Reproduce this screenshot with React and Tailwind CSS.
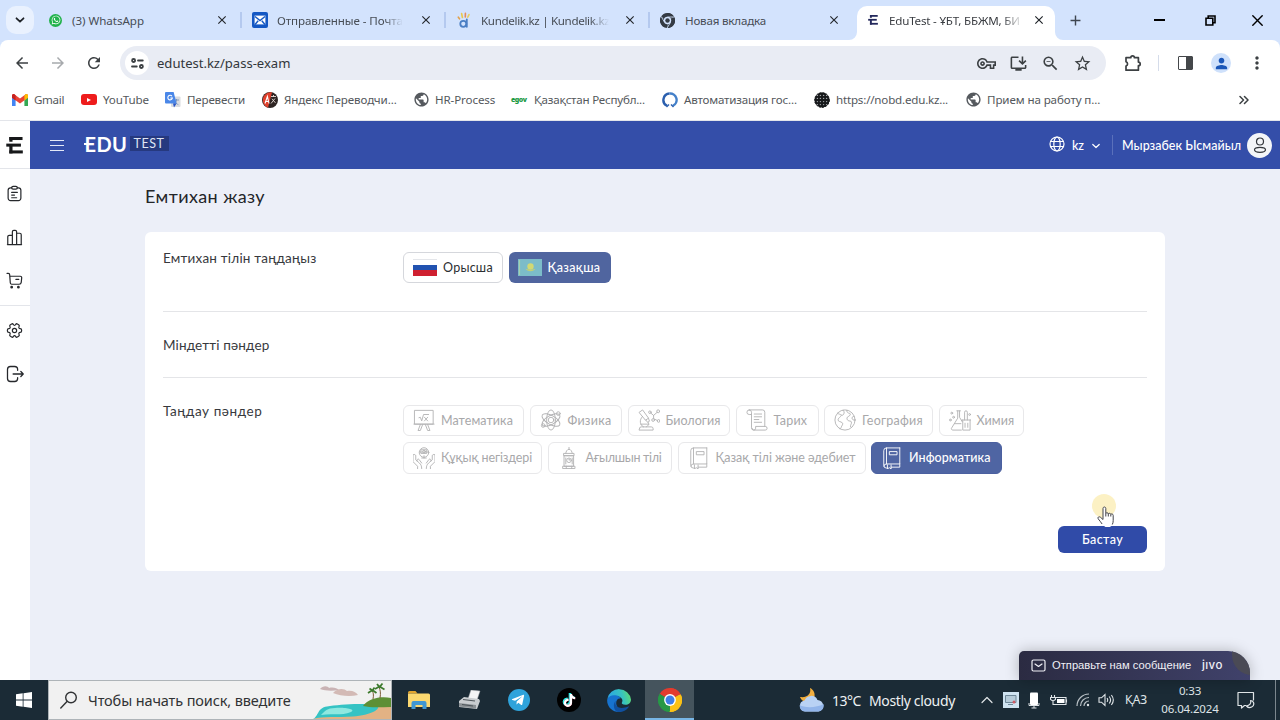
import React from "react";
import { FaWhatsapp, FaTiktok, FaTelegramPlane } from "react-icons/fa";
import {
  MdOutlineVpnKey,
  MdOutlineInstallDesktop,
  MdOutlineZoomOut,
  MdStarBorder,
  MdPublic,
  MdPerson,
  MdMoreVert,
  MdClose,
  MdAdd,
  MdArrowBack,
  MdArrowForward,
  MdRefresh,
} from "react-icons/md";

const LineIcon = ({ size = 22, box = 24, width = 1, className = "", children }) => (
  <svg
    width={size}
    height={size}
    viewBox={`0 0 ${box} ${box}`}
    fill="none"
    stroke="currentColor"
    strokeWidth={width}
    strokeLinecap="round"
    strokeLinejoin="round"
    className={`shrink-0 ${className}`}
  >
    {children}
  </svg>
);

/* ---------- brand icons ---------- */

const EduMark = ({ size, color }) => (
  <svg width={size} height={size} viewBox="0 0 18 18" fill={color}>
    <rect x="3.5" y="0" width="14" height="3.2" />
    <rect x="3.5" y="0" width="3.4" height="5" />
    <rect x="0.3" y="7" width="15.5" height="3.2" />
    <rect x="3.5" y="8" width="3.4" height="9.4" />
    <rect x="3.5" y="14.2" width="14.3" height="3.2" />
  </svg>
);

const ChromeIcon = ({ size, mono }) => {
  const c = mono ? ["#343b44", "#343b44", "#343b44", "#343b44"] : ["#e33b2e", "#fbc116", "#279847", "#3f7fe8"];
  return (
    <svg width={size} height={size} viewBox="0 0 24 24" className="shrink-0">
      <path d="M12 12 1.6 6A12 12 0 0 1 22.4 6Z" fill={c[0]} />
      <path d="M12 12 22.4 6A12 12 0 0 1 12 24Z" fill={c[1]} />
      <path d="M12 12V24A12 12 0 0 1 1.6 6Z" fill={c[2]} />
      <path d="M12 6.5H22.7L22.4 6A12 12 0 0 0 12 0Z" fill={c[0]} />
      <path d="M16.8 14.7 11.4 24H12A12 12 0 0 0 23 7Z" fill={c[1]} />
      <path d="M7.2 14.7 1.9 5.6A12 12 0 0 0 8 23Z" fill={c[2]} />
      {mono && (
        <path d="M12 6.4H22.6M16.8 14.8 11.5 24M7.2 14.8 1.9 5.6" stroke="#d3e3fd" strokeWidth="1.3" fill="none" />
      )}
      <circle cx="12" cy="12" r="5.9" fill={mono ? "#d3e3fd" : "#fff"} />
      <circle cx="12" cy="12" r={mono ? 3.6 : 4.5} fill={c[3]} />
    </svg>
  );
};

const MailIcon = () => (
  <svg width="16" height="16" viewBox="0 0 16 16">
    <rect width="16" height="16" rx="2" fill="#1458c4" />
    <rect x="2.6" y="3.6" width="10.8" height="8.8" fill="#fff" />
    <path d="m3 4.5 5 4 5-4M3 12.5l3.2-3.8M13 12.5l-3.2-3.8" stroke="#1458c4" strokeWidth="1.4" fill="none" />
  </svg>
);

const KundelikIcon = () => (
  <svg width="14" height="17" viewBox="0 0 14 17" fill="none" strokeLinecap="round">
    <circle cx="6.3" cy="11.8" r="3" stroke="#4b7fc4" strokeWidth="1.8" />
    <path d="M9.8 7.5v7.3" stroke="#4b7fc4" strokeWidth="1.8" />
    <path d="m1.3 5.2 1.2 1.6" stroke="#e3a04a" strokeWidth="1.6" />
    <path d="m4.6 1.5.8 4" stroke="#e9c94c" strokeWidth="1.6" />
    <path d="M8.4 1.2 8.3 5" stroke="#e68a5a" strokeWidth="1.6" />
    <path d="m12 2.6-1.2 2.6" stroke="#e6cf63" strokeWidth="1.6" />
  </svg>
);

const GmailIcon = () => (
  <svg width="16" height="12" viewBox="0 0 16 12">
    <path d="M0 1.5V12h3.6V4.6Z" fill="#4285f4" />
    <path d="M16 1.5V12h-3.6V4.6Z" fill="#34a853" />
    <path d="M0 3.8V1.5C0 .2 1.5-.5 2.6.4L8 4.6 13.4.4C14.5-.5 16 .2 16 1.5v2.3L8 9.6Z" fill="#ea4335" />
    <path d="M12.4 1.2v5.2L16 3.8V1.5C16 .2 14.5-.5 13.4.4Z" fill="#fbbc04" />
    <path d="M0 1.5v2.3l3.6 2.6V1.2L2.6.4C1.5-.5 0 .2 0 1.5Z" fill="#c5221f" />
  </svg>
);

const TranslateIcon = () => (
  <svg width="16" height="16" viewBox="0 0 16 16">
    <rect x="6" y="4.5" width="9.5" height="10.5" rx="1" fill="#dadce0" />
    <path d="M9 8h5M11.5 7v1c0 2-1.2 3.6-2.6 4.6M10 9.5c.7 1.6 2 2.6 3.4 3.2" stroke="#7a93b8" strokeWidth=".9" fill="none" />
    <path d="M1 0h7.6l3 11.5H1a1 1 0 0 1-1-1V1a1 1 0 0 1 1-1Z" fill="#4a87e8" />
    <path d="m8 11.5 1 4 2.6-4Z" fill="#2a56c6" />
    <path d="M7 4.2A2.3 2.3 0 1 0 7.4 6H5.3" stroke="#fff" strokeWidth="1.1" fill="none" />
  </svg>
);

const YandexIcon = () => (
  <svg width="16" height="16" viewBox="0 0 16 16" fill="none">
    <circle cx="8" cy="8" r="8" fill="#2e2523" />
    <path d="M10 .3 6 15.7A8 8 0 0 1 10 .3Z" fill="#e0412d" />
    <path d="m3 11.5 2.4-7 1.6 7M3.8 9.5h2.7" stroke="#fff" strokeWidth="1.1" />
    <path d="M9 4.5h5M11.5 3v2M10 6.8l3.4 4M13 6.5 9 11.5" stroke="#e8ddd8" strokeWidth=".9" />
  </svg>
);

const NobdIcon = () => (
  <svg width="16" height="16" viewBox="0 0 16 16">
    <circle cx="8" cy="8" r="7.5" fill="#17191b" />
    <circle cx="8" cy="8" r="7.4" fill="none" stroke="#17191b" strokeWidth="1" strokeDasharray="2 1.2" />
    {[3.4, 6.4, 9.6, 12.6].map((x) =>
      [3.4, 6.4, 9.6, 12.6].map((y) => <circle key={`${x}-${y}`} cx={x} cy={y} r=".7" fill="#a3a6a9" />)
    )}
  </svg>
);

/* ---------- browser ---------- */

const tabs = [
  {
    title: "(3) WhatsApp",
    text: "tracking-[-0.04px]",
    icon: (
      <span className="flex h-[13px] w-[13px] items-center justify-center rounded-full bg-[#22b24c] text-[10px] text-white">
        <FaWhatsapp />
      </span>
    ),
  },
  { title: "Отправленные - Почта", text: "tracking-[-0.09px] mask-r-from-85%", icon: <MailIcon /> },
  { title: "Kundelik.kz | Kundelik.kz", text: "tracking-[-0.33px] mask-r-from-85%", icon: <KundelikIcon /> },
  { title: "Новая вкладка", text: "tracking-[-0.2px]", icon: <ChromeIcon size={15} mono /> },
];

const TabStrip = () => (
  <div className="flex h-10 bg-[#d3e3fd] text-[11.6px] text-[#474d55]">
    <div className="flex w-[38px] shrink-0 items-center pl-1.5">
      <div className="flex h-7 w-7 items-center justify-center rounded-[10px] bg-[#e9f1fe]">
        <LineIcon size={10} box={10} width={1.8} className="text-[#1f2328]">
          <path d="m1.5 3.3 3.5 3.4 3.5-3.4" />
        </LineIcon>
      </div>
    </div>
    {tabs.map((tab, i) => (
      <div key={i} className="flex w-[204px] shrink-0 items-center">
        <span className="flex w-[34px] shrink-0 justify-center pl-px">{tab.icon}</span>
        <span className={`whitespace-nowrap pt-0.5 ${i === 0 ? "" : "ml-px"} ${tab.text}`}>{tab.title}</span>
        <span className="ml-auto mr-[11px] text-[14px] text-[#24282d]">
          <MdClose />
        </span>
        <span className={`h-4 w-0.5 ${i < 3 ? "bg-[#b4c9ef]" : ""}`} />
      </div>
    ))}
    <div className="relative ml-[3px] mt-1.5 flex w-[198px] shrink-0 items-center rounded-t-[10px] bg-white pb-1.5 text-[#3a3d42]">
      <svg className="absolute -left-2 bottom-0" width="8" height="8" viewBox="0 0 8 8">
        <path d="M8 0v8H0A8 8 0 0 0 8 0Z" fill="#fff" />
      </svg>
      <svg className="absolute -right-2 bottom-0" width="8" height="8" viewBox="0 0 8 8">
        <path d="M0 0v8h8A8 8 0 0 1 0 0Z" fill="#fff" />
      </svg>
      <span className="ml-[11px] w-[20px]">
        <EduMark size={10} color="#23285c" />
      </span>
      <span className="ml-px w-[134px] whitespace-nowrap pt-0.5 tracking-[-0.2px] mask-r-from-85%">
        EduTest - ҰБТ, ББЖМ, БИ
      </span>
      <span className="ml-[9px] text-[14px] text-[#1f2328]">
        <MdClose />
      </span>
    </div>
    <div className="flex w-10 items-center justify-center text-[17px] text-[#3f4650]">
      <MdAdd />
    </div>
    <div className="ml-auto flex items-center text-black">
      <span className="mr-[40px] h-[1.5px] w-[11px] bg-black" />
      <LineIcon size={11} box={11} width={1.6} className="mr-[36px]">
        <path d="M1 3.2h6.8V10H1ZM3.2 3V1H10v6.8H8" strokeLinejoin="miter" />
      </LineIcon>
      <LineIcon size={11} box={11} width={1.4} className="mr-[17.5px]">
        <path d="m.8.8 9.4 9.4M10.2.8.8 10.2" />
      </LineIcon>
    </div>
  </div>
);

const Toolbar = () => (
  <div className="bg-[#d3e3fd]">
    <div className="flex h-[46px] items-center rounded-t-lg bg-white text-[#3c4043]">
      <MdArrowBack className="ml-[13px] text-[18px]" />
      <MdArrowForward className="ml-[18px] text-[18px] text-[#a7aaad]" />
      <MdRefresh className="ml-[18px] text-[18px]" />
      <div className="ml-[17px] flex h-[34px] w-[986px] items-center rounded-full bg-[#e9ecf4]">
        <span className="ml-[5px] flex h-6 w-6 items-center justify-center rounded-full bg-white">
          <LineIcon size={13} box={13} width={1.8}>
            <circle cx="2.6" cy="3.5" r="1.5" />
            <path d="M7 3.5h4.8M1 9.5h4.8" />
            <circle cx="10.4" cy="9.5" r="1.5" />
          </LineIcon>
        </span>
        <span className="ml-2 pt-px text-[13.1px] tracking-[-0.03px] text-[#33373b]">edutest.kz/pass-exam</span>
        <span className="ml-auto flex items-center gap-[13px] pr-[14.5px] text-[19px]">
          <MdOutlineVpnKey />
          <MdOutlineInstallDesktop />
          <MdOutlineZoomOut />
          <MdStarBorder />
        </span>
      </div>
      <LineIcon size={18} box={18} width={1.7} className="ml-[18px]">
        <path d="M2 3.7h4.8a1.8 1.8 0 0 1 3.6 0h4v4.4a1.8 1.8 0 0 1 0 3.6v4.5H2V12a2.2 2.2 0 0 0 0-4.2Z" />
      </LineIcon>
      <span className="ml-[16px] h-4 w-px bg-[#d5dcea]" />
      <span className="ml-[19px] flex h-[14px] w-[15px] rounded-[1px] border-[1.6px] border-[#44474a]">
        <span className="ml-auto w-[6px] bg-[#44474a]" />
      </span>
      <span className="ml-[18px] flex h-5 w-5 items-center justify-center rounded-full bg-[#cfe1fb] text-[17px] text-[#1b57b8]">
        <MdPerson />
      </span>
      <MdMoreVert className="ml-[16px] text-[20px]" />
    </div>
  </div>
);

const Bookmark = ({ icon, iconWidth, width, tracking, children }) => (
  <div className={`flex shrink-0 items-center ${width}`}>
    <span className={`flex shrink-0 ${iconWidth}`}>{icon}</span>
    <span className={`whitespace-nowrap ${tracking}`}>{children}</span>
  </div>
);

const Bookmarks = () => (
  <div className="flex h-[35px] items-center border-b border-[#e3e5ea] bg-white pb-[6px] pl-3 text-[11.6px] text-[#54585c]">
    <Bookmark icon={<GmailIcon />} iconWidth="w-[22px]" width="w-[69px]" tracking="tracking-[-0.34px]">Gmail</Bookmark>
    <Bookmark
      icon={
        <span className="flex h-[11px] w-4 items-center justify-center rounded-[3px] bg-[#ee1c1c]">
          <span className="border-y-[2.5px] border-l-[4px] border-y-transparent border-l-white" />
        </span>
      }
      iconWidth="w-[22px]"
      width="w-[84px]"
      tracking="tracking-[-0.12px]"
    >
      YouTube
    </Bookmark>
    <Bookmark icon={<TranslateIcon />} iconWidth="w-[22px]" width="w-[97px]" tracking="tracking-[-0.18px]">Перевести</Bookmark>
    <Bookmark icon={<YandexIcon />} iconWidth="w-[22px]" width="w-[152px]" tracking="tracking-[-0.08px]">Яндекс Переводчи...</Bookmark>
    <Bookmark icon={<MdPublic className="-ml-px text-[17px] text-[#55595e]" />} iconWidth="w-[21px]" width="w-[97px]" tracking="tracking-[-0.11px]">HR-Process</Bookmark>
    <Bookmark
      icon={<span className="text-[7px] font-black leading-none tracking-[-0.5px] text-[#1c9a43]">egov</span>}
      iconWidth="w-[23px]"
      width="w-[151px]"
      tracking="tracking-[-0.23px]"
    >
      Қазақстан Республ...
    </Bookmark>
    <Bookmark
      icon={
        <svg width="16" height="16" viewBox="0 0 16 16" fill="none" strokeWidth="2.4">
          <path d="M5 13.8A6.5 6.500 0 0 1 7.6 1.5" stroke="#2b5fae" />
          <path d="M7.6 1.5A6.5 6.500 0 0 1 11 13.800" stroke="#4480c9" />
          <path d="m4.500 15 2.500-2.500M11.500 15 9 12.500" stroke="#2b5fae" strokeWidth="1.400" />
        </svg>
      }
      iconWidth="w-[22px]"
      width="w-[152px]"
      tracking="tracking-[-0.2px]"
    >
      Автоматизация гос...
    </Bookmark>
    <Bookmark icon={<NobdIcon />} iconWidth="w-[22px]" width="w-[152px]" tracking="tracking-[-0.2px]">https://nobd.edu.kz...</Bookmark>
    <Bookmark icon={<MdPublic className="-ml-px text-[17px] text-[#55595e]" />} iconWidth="w-[21px]" width="w-[140px]" tracking="tracking-[-0.11px]">Прием на работу п...</Bookmark>
    <LineIcon size={10} box={10} width={1.5} className="ml-auto mr-[31px] text-[#3c4043]">
      <path d="m1 1.5 3.5 3.5L1 8.5M5.5 1.5 9 5 5.5 8.5" />
    </LineIcon>
  </div>
);

/* ---------- application ---------- */

const Sidebar = () => (
  <aside className="flex w-[30px] shrink-0 flex-col items-center bg-white pr-px text-[#26282c]">
    <div className="-mr-px flex h-12 w-[30px] items-center justify-center border-b border-[#e3e5ea] pr-[2px] pt-px">
      <EduMark size={17} color="#17181a" />
    </div>
    <div className="flex flex-col items-center gap-[26.5px] pt-4">
      <LineIcon size={17} width={1.7}>
        <path d="M8 4H6.5A3.5 3.5 0 0 0 3 7.5v11A3.5 3.5 0 0 0 6.5 22h11a3.5 3.5 0 0 0 3.5-3.5v-11A3.5 3.5 0 0 0 17.5 4H16" />
        <rect x="8" y="1.8" width="8" height="4" rx="2" />
        <path d="M8 10.5h8M8 14.2h4M8 18h7" />
      </LineIcon>
      <LineIcon size={17} width={1.7}>
        <path d="M2 22h20M9 22V4a2 2 0 0 1 2-2h2a2 2 0 0 1 2 2v18M2.5 22V11a2 2 0 0 1 2-2H9M15 6h4.500a2 2 0 0 1 2 2v14" />
      </LineIcon>
      <LineIcon size={17} width={1.7}>
        <path d="M1.5 2h1.7A2 2 0 0 1 5.2 4l.9 11.5a2 2 0 0 0 2 1.8h10.4a3 3 0 0 0 3-2.7l.7-6.6A2 2 0 0 0 20.200 6H5.5M14 10.5h4" />
        <circle cx="8" cy="21.5" r="1.1" fill="currentColor" />
        <circle cx="17.5" cy="21.5" r="1.1" fill="currentColor" />
      </LineIcon>
    </div>
    <div className="-mr-px mt-4 h-px w-[30px] bg-[#e3e5ea]" />
    <div className="mt-[15.5px] flex flex-col items-center gap-[26px]">
      <LineIcon size={17} width={1.7}>
        <circle cx="12" cy="12" r="3" />
        <path d="M2 12.88v-1.76c0-1.04.85-1.9 1.9-1.9 1.81 0 2.55-1.28 1.64-2.85-.52-.9-.21-2.07.7-2.59l1.73-.99c.79-.47 1.81-.19 2.28.6l.11.19c.9 1.57 2.38 1.57 3.29 0l.11-.19c.47-.79 1.49-1.07 2.28-.6l1.73.99c.91.52 1.22 1.69.7 2.59-.91 1.57-.17 2.85 1.64 2.85 1.04 0 1.9.85 1.9 1.9v1.76c0 1.04-.85 1.9-1.9 1.9-1.81 0-2.55 1.28-1.64 2.85.52.91.21 2.07-.7 2.59l-1.73.99c-.79.47-1.81.19-2.28-.6l-.11-.19c-.9-1.57-2.38-1.57-3.29 0l-.11.19c-.47.79-1.49 1.07-2.28.6l-1.73-.99a1.9 1.9 0 0 1-.7-2.59c.91-1.57.17-2.85-1.64-2.85-1.05 0-1.9-.86-1.9-1.9Z" />
      </LineIcon>
      <LineIcon size={18} width={1.7}>
        <path d="M15.5 7V6a4 4 0 0 0-4-4H6a4 4 0 0 0-4 4v12a4 4 0 0 0 4 4h5.5a4 4 0 0 0 4-4v-1M9.5 12H23M19.8 8.7 23 12l-3.2 3.3" />
      </LineIcon>
    </div>
  </aside>
);

const Header = () => (
  <header className="flex h-12 items-center bg-[#344ea9] text-white">
    <div className="ml-5 flex w-[14px] flex-col gap-[3.5px] pt-px">
      <span className="h-[1.5px] bg-[#e3e8f7]" />
      <span className="h-[1.5px] bg-[#e3e8f7]" />
      <span className="h-[1.5px] bg-[#e3e8f7]" />
    </div>
    <div className="relative mb-[3px] ml-[20.5px] w-[45px] text-[20px] font-bold leading-none tracking-[0.4px]">
      EDU
      <span className="absolute -left-px top-[9px] h-[2.5px] w-[4px] bg-white" />
    </div>
    <span className="mb-[3px] flex h-[15px] w-[39px] items-center justify-center bg-[#26397f] pt-px text-[12.5px] tracking-[0.5px] text-[#dfe5f5]">
      TEST
    </span>
    <div className="ml-auto flex items-center text-[12.5px] font-medium">
      <LineIcon size={16} box={16} width={1.2} className="mb-[3px]">
        <circle cx="8" cy="8" r="7" />
        <ellipse cx="8" cy="8" rx="3.2" ry="7" />
        <path d="M1.7 5.5h12.6M1.7 10.5h12.6" />
      </LineIcon>
      <span className="ml-[7px] pt-0.5">kz</span>
      <LineIcon size={8} box={8} width={1.2} className="ml-2 mt-0.5">
        <path d="m.8 2.5 3.200 3 3.200-3" />
      </LineIcon>
      <span className="ml-[12px] h-5 w-px bg-[#5a70bb]" />
      <span className="ml-[9px] w-[119px] whitespace-nowrap pt-0.5 tracking-[0.02px]">Мырзабек Ысмайыл</span>
      <span className="ml-[6px] mr-2 flex h-[25px] w-[25px] items-center justify-center rounded-full bg-[#f4f5f8] text-[#33363b]">
        <LineIcon size={16} box={16} width={1.2}>
          <circle cx="8" cy="4.5" r="3.5" />
          <ellipse cx="8" cy="12.8" rx="5.5" ry="2.5" />
        </LineIcon>
      </span>
    </div>
  </header>
);

const BookIcon = (
  <LineIcon>
    <path d="M20.5 1H6a3 3 0 0 0-3 3v16a3 3 0 0 0 3 3h1M20.5 1v17.5H6A2.6 2.6 0 0 0 3.2 21M6 1v17.5M20.5 18.5V22H11M9.5 5h8v3.5h-8ZM7 19.5V24l2-1.5 2 1.5v-4.5" />
  </LineIcon>
);

const subjects = [
  [
    {
      name: "Математика",
      width: "w-[121px]",
      text: "tracking-[0.07px]",
      icon: (
        <LineIcon>
          <path d="M2 1.5h20v15H2ZM1 16.5h22M8 17l-2.500 6.500h2.500L10.500 17M16 17l2.500 6.500H16L13.500 17M6.500 9.500l1.500-.5 1.500 4 2-7H17M12.500 9l3.500 4M16 9l-3.500 4" />
        </LineIcon>
      ),
    },
    {
      name: "Физика",
      width: "w-[92.5px]",
      text: "tracking-[0.25px]",
      icon: (
        <LineIcon>
          <circle cx="12" cy="12" r="3" />
          <ellipse cx="12" cy="12" rx="4.8" ry="11" />
          <ellipse cx="12" cy="12" rx="4.8" ry="11" transform="rotate(60 12 12)" />
          <ellipse cx="12" cy="12" rx="4.8" ry="11" transform="rotate(120 12 12)" />
          <circle cx="20" cy="5" r="2" />
          <circle cx="3.5" cy="18" r="2" />
        </LineIcon>
      ),
    },
    {
      name: "Биология",
      width: "w-[102.5px]",
      text: "tracking-[0.04px]",
      icon: (
        <LineIcon>
          <path d="M1.500 3.500 5 1l6.500 9-3 2ZM8.500 12l2 2.500 2-1.200-1-3M5 8c-4 4-3 9.500 1 11.500M3 16.500h9M11 14.500c1.500 2 0 4-2 5M1.500 23h15v-1.500a2 2 0 0 0-2-2H3.500a2 2 0 0 0-2 2ZM14 4.500l3 2.500 4-3.500M17 7v3.500l4 2" />
          <circle cx="13" cy="3.500" r="1.400" />
          <circle cx="22" cy="2.500" r="1.600" />
          <circle cx="16.500" cy="12" r="1.500" />
          <circle cx="22.500" cy="13" r="1.500" />
        </LineIcon>
      ),
    },
    {
      name: "Тарих",
      width: "w-[83px]",
      text: "tracking-[0.25px]",
      icon: (
        <LineIcon>
          <path d="M3.5 1H18a2.5 2.5 0 0 1 2.5 2.5V19M3.5 1A2.5 2.5 0 0 0 3.5 6H6M3.5 1A2.5 2.5 0 0 1 6 3.5V20.5A2.5 2.5 0 0 0 8.5 23H21a2 2 0 0 0 0-4H10.5v2a2 2 0 0 1-4 0M9 5.500h8M9 8.500h8M9 11.500h5M9 14.500h8" />
        </LineIcon>
      ),
    },
    {
      name: "География",
      width: "w-[109px]",
      text: "tracking-[0.24px]",
      icon: (
        <LineIcon>
          <circle cx="12" cy="12" r="11" />
          <path d="M4 4.500c1 1.500 3 1 4 2s2.500 0 3-2-1-2-1-3.300M8 7c-1 2.500-3 2-3.500 4.500s3 2 4.500 3.500-.5 3-1 4.500-.5 2.500-2 2M14 1.300c-.5 2 1 3 3 3.500s0 3-1.500 3.500-2 2.500-.5 4 3.500 0 4 2-1.500 3-1 5M22 8c-2 0-3 1.500-2 3s2 1 3 1" />
        </LineIcon>
      ),
    },
    {
      name: "Химия",
      width: "w-[85.5px]",
      text: "tracking-[0.1px]",
      icon: (
        <LineIcon>
          <path d="M8.500 2h4M9.500 2v8L3 20.500A1.500 1.500 0 0 0 4.300 23h9.200M11.500 2v7l3 5M6 16h7M14 12h10M15 12v11h8V12M17 12V3.500a1.500 1.500 0 0 1 3 0V12M17.500 15.500v4.500M20.500 15.500v4.500" />
          <circle cx="3" cy="4.500" r="1" />
          <circle cx="5" cy="9" r="1" />
          <circle cx="1.500" cy="12" r="1" />
          <circle cx="22.500" cy="6" r="1" />
        </LineIcon>
      ),
    },
  ],
  [
    {
      name: "Құқық негіздері",
      width: "w-[139px]",
      text: "tracking-[-0.12px]",
      icon: (
        <LineIcon>
          <path d="M0 8.500v7.500l5 5V24M0 8.500c1.500-1 3 0 3 1v4.500l4 3.500c1.500 1.500 2.500 3 2.500 6M4.500 15.500c-.5-2 1-3 2-2l3 4M24 8.500v7.500l-5 5V24M24 8.500c-1.500-1-3 0-3 1v4.500l-4 3.500c-1.500 1.500-2.500 3-2.500 6M19.500 15.500c.5-2-1-3-2-2l-3 4M9 3h6v4H9ZM12 9.500V12M9.500 12h5M7 5.500h10" />
          <circle cx="12" cy="6" r="5.200" />
          <circle cx="12" cy="5" r="1.500" />
        </LineIcon>
      ),
    },
    {
      name: "Ағылшын тілі",
      width: "w-[124.5px]",
      text: "tracking-[-0.3px]",
      icon: (
        <LineIcon>
          <path d="M12 0v2.500M8.500 7c0-2 1.500-4.500 3.500-4.500S15.500 5 15.500 7M6.500 7h11v2.500h-11ZM7 9.500h10V21H7ZM5.500 21h13v2.500h-13ZM8.500 12v6.500M15.500 12v6.500M9 21v2.500M15 21v2.500" />
          <circle cx="12" cy="14.500" r="2.500" />
          <path d="M12 13.200v1.300l1-.8" />
        </LineIcon>
      ),
    },
    { name: "Қазақ тілі және әдебиет", width: "w-[188px]", text: "tracking-[-0.05px]", icon: BookIcon },
    { name: "Информатика", width: "w-[130.5px]", text: "tracking-[0.06px]", icon: BookIcon, active: true },
  ],
];

const SubjectButton = ({ subject }) => (
  <button
    className={`flex h-[31.5px] shrink-0 items-center gap-1.5 rounded-md border pl-[9px] text-[12.5px] ${subject.width} ${
      subject.active ? "border-[#4b60a0] bg-[#4f65a3] font-medium text-white" : "border-[#e8e8ea] bg-white text-[#b2b2b4]"
    }`}
  >
    {subject.icon}
    <span className={`whitespace-nowrap pt-0.5 ${subject.active ? "" : "text-[#a8a8aa]"} ${subject.text}`}>{subject.name}</span>
  </button>
);

const RussianFlag = () => (
  <span className="flex h-[17px] w-6 flex-col border-t border-[#e4e6ea]">
    <span className="flex-1 bg-white" />
    <span className="flex-1 bg-[#2152b0]" />
    <span className="flex-1 bg-[#cf2030]" />
  </span>
);

const KazakhFlag = () => (
  <svg width="24" height="17" viewBox="0 0 24 17">
    <rect width="24" height="17" fill="#7cbcc9" />
    <path d="M1.5 1v15" stroke="#a5cfae" strokeWidth="1.2" />
    <circle cx="12.5" cy="7.5" r="3.2" fill="#d2d973" />
    <path d="M7.5 9.500c1.500 3.500 8.500 3.500 10 0-1.500 1.500-8.500 1.500-10 0Z" fill="#c3cf74" />
  </svg>
);

const ExamCard = () => (
  <section className="flex h-[339.5px] w-[1020px] flex-col rounded-md bg-white px-[18px] text-[13.5px] text-[#37393d]">
    <div className="flex h-20 border-b border-[#e4e5e8] pt-5">
      <div className="w-60 -translate-y-[4px] tracking-[0.2px]">Емтихан тілін таңдаңыз</div>
      <div className="flex gap-1.5 text-[12.5px]">
        <button className="flex h-[31.5px] w-[99.5px] items-center gap-1.5 rounded-md border border-[#d5d7dc] pl-[9px] text-[#2c2e32]">
          <RussianFlag />
          <span className="pt-0.5 tracking-[0.25px]">Орысша</span>
        </button>
        <button className="flex h-[31.5px] w-[102px] items-center gap-1.5 rounded-md bg-[#50659f] pl-[9px] font-medium text-white">
          <KazakhFlag />
          <span className="pt-0.5 tracking-[0.3px]">Қазақша</span>
        </button>
      </div>
    </div>
    <div className="flex h-[66px] items-center border-b border-[#e4e5e8] pt-0.5 tracking-[0.15px]">Міндетті пәндер</div>
    <div className="flex pt-[27px]">
      <div className="w-60 -translate-y-[4px] tracking-[0.58px]">Таңдау пәндер</div>
      <div className="flex flex-col gap-1.5">
        {subjects.map((row, i) => (
          <div key={i} className="flex gap-[5.5px]">
            {row.map((subject) => (
              <SubjectButton key={subject.name} subject={subject} />
            ))}
          </div>
        ))}
      </div>
    </div>
    <div className="relative mb-[18px] ml-auto mt-auto">
      <button className="block h-[27px] w-[89px] rounded-md bg-[#304ba8] pt-px text-[12.5px] font-medium tracking-[0.4px] text-white">
        Бастау
      </button>
      <span className="absolute left-[34px] top-[-32px] h-6 w-6 rounded-full bg-[#fbeeb5]/80" />
      <svg className="absolute left-[39px] top-[-20px]" width="18" height="22" viewBox="0 0 18 22">
        <path
          d="M6 14.5V2.5c0-2 2.8-2 2.8 0v5c.3-1.2 2.5-1 2.5.5.3-1.1 2.5-.9 2.5.5.4-1 2.4-.7 2.4.9v5.1c0 3.500-1.500 6-3.500 6.500H8.500C6.500 20 4 16 1.200 12.800c-1-1.500.8-2.600 2.200-1.600L6 13.500"
          fill="#fff"
        />
        <path
          d="M6 13.500V2.500c0-2 2.8-2 2.8 0v5c.3-1.2 2.5-1 2.5.5.3-1.1 2.5-.9 2.5.5.4-1 2.4-.7 2.4.9v5.100c0 1.500-.3 3-.9 4M6 13.500l-2.600-2.300c-1.400-1-3.200.1-2.200 1.600 1.400 1.600 2.700 3.500 3.900 5.200M8.800 7.500v3M11.300 8v2.500M13.800 8.500v2"
          fill="none"
          stroke="#43444a"
          strokeWidth="1"
        />
      </svg>
    </div>
  </section>
);

const JivoWidget = () => (
  <div className="absolute bottom-0 right-[30px] flex h-[29.5px] w-[231.5px] items-center overflow-hidden rounded-tl-[5px] rounded-tr-[22px] bg-linear-to-r from-[#2b2b42] to-[#40426b] font-['Liberation_Sans'] text-[11.2px] text-[#f0f0f6] shadow-[0_0_14px_rgba(0,0,0,0.25)]">
    <LineIcon size={15} box={15} width={1.2} className="ml-3">
      <rect x="1" y="2" width="13" height="11" rx="1.5" />
      <path d="m4 6 3.5 2.5L11 6" />
    </LineIcon>
    <span className="ml-[6.5px] w-[150px] whitespace-nowrap">Отправьте нам сообщение</span>
    <span className="font-['Inter'] text-[11.5px] font-medium tracking-[0.4px]">jıvo</span>
    <span className="absolute -right-1 -top-1 h-[28px] w-[22px] rounded-bl-[20px] bg-[#4a4a55]" />
  </div>
);

/* ---------- taskbar ---------- */

const BeachArt = () => (
  <svg width="78" height="38" viewBox="0 0 78 38" className="ml-auto">
    <path d="M7 8c3-4 8-3 9-1 4-1 8 0 10 2-6 1-14 1-19-1Z" fill="#c9b3b4" />
    <path d="M20 12c4-5 11-5 14-2 5-1 9 1 11 4-8 2-18 1-25-2Z" fill="#d3bab5" />
    <path d="M0 38C22 32 40 24 78 24v14Z" fill="#e2b284" />
    <path d="M0 38c6-3 4-11 14-12.500 12-2 36-4 50-1 5 3-6 10-24 11-16 1-30-.5-40 2.500Z" fill="#35c3c4" />
    <path d="M8 34c4-4 6-7 14-7 8-1 22 1 16 4-10 4-20 1-30 3Z" fill="#8fe8e0" />
    <path d="M50 25c6-8 18-10 28-8v9c-10 0-20 1-28-1Z" fill="#5d8f35" />
    <path d="M60 18c1-4 0-7-.5-8M67 17c1-5 0-8-.5-10" stroke="#7a5a34" strokeWidth="1" fill="none" />
    <path d="m55 12 4.500-3 4 3M56.500 7.500l3 2 2-3M62 8l4.500-2.500 5 3M64 3l2.500 3 3-3.500" stroke="#3d7a2d" strokeWidth="1.800" fill="none" />
  </svg>
);

const pinned = [
  <svg width="22" height="18" viewBox="0 0 22 18">
    <path d="M0 1.5A1.5 1.5 0 0 1 1.5 0h6l2 2.500H0Z" fill="#e2a52e" />
    <path d="M0 2.5h20.5A1.5 1.5 0 0 1 22 4v12H0Z" fill="#fbd870" />
    <path d="M3.5 18v-6a2 2 0 0 1 2-2h11a2 2 0 0 1 2 2v6h-4v-4h-7v4Z" fill="#3f97d3" />
  </svg>,
  <svg width="23" height="20" viewBox="0 0 23 20">
    <path d="M10 9 13 0l9 1-3 9Z" fill="#f4f5f6" stroke="#a9adb0" strokeWidth=".5" />
    <path d="m1 11 5-4 15 2 1 2-3 8-18-2Z" fill="#c9cdd0" />
    <path d="m1 13 17 2v3.5L1 16.5Z" fill="#8a9094" />
    <path d="m5 9.5 12 1.5M4 14.5l11 1.5" stroke="#4f565b" strokeWidth="1.2" />
  </svg>,
  <span className="flex h-[22px] w-[22px] items-center justify-center rounded-full bg-[#2fa3db] pr-0.5 text-[14px] text-white">
    <FaTelegramPlane />
  </span>,
  <span className="flex h-6 w-6 items-center justify-center rounded-full bg-black text-[13px] text-white">
    <FaTiktok className="[filter:drop-shadow(0.8px_0.5px_0_#fe2c55)_drop-shadow(-0.8px_-0.5px_0_#25f4ee)]" />
  </span>,
  <svg width="24" height="24" viewBox="0 0 24 24">
    <defs>
      <linearGradient id="edgeTop" x1="0" x2="1" y1="0.4" y2="0.2">
        <stop offset="0" stopColor="#2aa5e6" />
        <stop offset="0.6" stopColor="#37c3c0" />
        <stop offset="1" stopColor="#62dd6a" />
      </linearGradient>
    </defs>
    <path d="M.3 11A12 12 0 0 1 24 11.5c0 3.5-2.7 5.3-5.5 5.3-3 0-4.200-1.200-3.600-2.200C17 11 13 8 9 8 5 8 1.500 9 .3 11Z" fill="url(#edgeTop)" />
    <path d="M.2 11.5C1.5 8 5 6.800 8.500 7.200c3.500.4 5 2.300 5 3.300-5-1-6.800 8.500 1 11.500-1 1.500-3 2-5 1.700C3.500 22.500-.3 17 .2 11.500Z" fill="#1773cf" />
    <path d="M8.7 13c-1.5 5 3 9.500 13.500 5.200C19 23.500 14 24.500 10.500 23.800 6 22 6 15 8.700 13Z" fill="#10509f" />
  </svg>,
];

const Taskbar = () => (
  <footer className="flex h-10 shrink-0 items-center bg-[#1b2b36] font-['Noto_Sans','Open_Sans',sans-serif] text-[#eef1f3]">
    <div className="flex w-12 justify-center">
      <svg width="16" height="16" viewBox="0 0 16 16" fill="#fff">
        <path d="M0 2.3 6.7 1.3v6.3H0ZM7.5 1.2 16 0v7.6H7.5ZM0 8.400h6.700v6.300L0 13.700ZM7.500 8.400H16V16l-8.500-1.200Z" />
      </svg>
    </div>
    <div className="flex h-10 w-[344px] items-center border border-[#aeb4b8] bg-[#f1f1f1] text-[#303234]">
      <LineIcon size={18} box={18} width={1.4} className="ml-[11px]">
        <circle cx="11" cy="6.5" r="5.3" />
        <path d="M7 10.5.8 17" />
      </LineIcon>
      <span className="ml-[10px] whitespace-nowrap pt-0.5 text-[14.5px] tracking-[-0.12px]">Чтобы начать поиск, введите</span>
      <BeachArt />
    </div>
    <div className="ml-[2px] flex">
      {pinned.map((icon, i) => (
        <div key={i} className="flex h-10 w-[50px] items-center justify-center">
          {icon}
        </div>
      ))}
      <div className="ml-[1px] flex h-10 w-[49px] items-center justify-center border-b-2 border-[#78b6e6] bg-[#45545d] pt-0.5">
        <ChromeIcon size={24} />
      </div>
    </div>
    <div className="ml-[105px] flex items-center">
      <svg width="25" height="24" viewBox="0 0 25 24">
        <path d="M11 0c1.5 6-3 10-10 9 1 3 4 5 8 5 5 0 8-5 6-10-1-2-2.5-3.5-4-4Z" fill="#f2ae3e" />
        <path d="M6 23.5a5.500 5.500 0 0 1-.5-10.900A7 7 0 0 1 18.500 12a5.800 5.800 0 0 1 1 11.500Z" fill="#b9d2f4" />
        <path d="M6 23.5A5.5 5.500 0 0 1 .8 17c4 3 17 3 23.700-1a5.800 5.800 0 0 1-5 7.500Z" fill="#92b5ea" />
      </svg>
      <span className="ml-2 w-[37px] pt-px text-[14px] tracking-[-0.5px]">13°C</span>
      <span className="whitespace-nowrap pt-px text-[14px] tracking-[-0.35px]">Mostly cloudy</span>
    </div>
    <div className="ml-auto flex items-center text-[#dfe4e7]">
      <LineIcon size={12} box={12} width={1.2}>
        <path d="m1 8.5 5-5 5 5" />
      </LineIcon>
      <span className="ml-[10px] flex h-4 w-4 items-center justify-center bg-[#cfe3f1]">
        <svg width="12" height="12" viewBox="0 0 12 12">
          <path d="M.5 1.500h10.500v7H.5ZM3 10.500h5" fill="#b6cbd9" stroke="#6e8798" />
          <circle cx="9" cy="8" r="1.500" fill="#cf5a64" />
        </svg>
      </span>
      <svg className="ml-[9px]" width="12" height="17" viewBox="0 0 12 17" fill="none" stroke="#dfe4e7">
        <rect x="2" y="0.5" width="8" height="12.500" rx="1" fill="#fff" stroke="none" />
        <path d="M1 11v2.500h10V11M6 13.500V16M3.500 16h5" />
      </svg>
      <svg className="ml-[10px]" width="18" height="13" viewBox="0 0 18 13" fill="none" stroke="#dfe4e7" strokeWidth="1.1">
        <path d="M5 3.500h11v7H5M16.500 5.500v3" />
        <path d="M7 5h7.500v4H7Z" fill="#fff" stroke="none" />
        <path d="M1.500 1v2M4.500 1v2M.5 3.500h5v2l-2.500 1.500L.5 5.500ZM3 7v3.500h3" />
      </svg>
      <svg className="ml-[8px]" width="14" height="14" viewBox="0 0 14 14" fill="none" stroke="#b9c1c6" strokeWidth="1.2">
        <path d="M1 13A12 12 0 0 1 13 1M4.500 13A8.500 8.500 0 0 1 13 4.500M8 13a5 5 0 0 1 5-5" />
        <circle cx="12" cy="12" r="1.2" fill="#dfe4e7" stroke="none" />
      </svg>
      <svg className="ml-[8px]" width="16" height="14" viewBox="0 0 16 14" fill="none" stroke="#dfe4e7" strokeWidth="1.1">
        <path d="M1 4.800h2.500L7 1.500v11L3.500 9.200H1ZM9 5.200c.8 1 .8 2.600 0 3.600M11.200 3.500c1.600 2 1.600 5 0 7M13.400 2c2.300 3 2.300 7 0 10" />
      </svg>
      <span className="ml-[11px] w-[23px] text-[12px] tracking-[-0.2px]">ҚАЗ</span>
      <div className="ml-[12px] flex h-10 w-[60px] flex-col items-center justify-between whitespace-nowrap py-[3px] text-[11.5px] leading-4 tracking-[-0.15px]">
        <span>0:33</span>
        <span>06.04.2024</span>
      </div>
      <LineIcon size={18} box={18} width={1.2} className="ml-[17px]">
        <path d="M9 14.500H7.500l-3 2.500v-2.500H1V1.500h15.500V9" />
        <path d="M13.500 9.500c1 3-1 5-4 5.500 3 3.500 8.500.5 7-3.500-.5-1.200-1.700-2-3-2Z" />
      </LineIcon>
      <span className="ml-[20px] mr-1 h-10 w-px bg-[#7c878e]" />
    </div>
  </footer>
);

const App = () => {
  return (
    <div className="flex h-[720px] w-[1280px] flex-col overflow-hidden bg-white font-['Noto_Sans','Open_Sans',sans-serif]">
      <TabStrip />
      <Toolbar />
      <Bookmarks />
      <div className="relative flex min-h-0 flex-1 font-['Lato','Open_Sans',sans-serif]">
        <Sidebar />
        <div className="flex flex-1 flex-col bg-[#eceff8]">
          <Header />
          <main className="pl-[115px]">
            <h1 className="flex h-[62.5px] items-center pb-[7px] text-[18px] tracking-[0.4px] text-[#232529]">
              Емтихан жазу
            </h1>
            <ExamCard />
          </main>
        </div>
        <JivoWidget />
      </div>
      <Taskbar />
    </div>
  );
};

export default App;
